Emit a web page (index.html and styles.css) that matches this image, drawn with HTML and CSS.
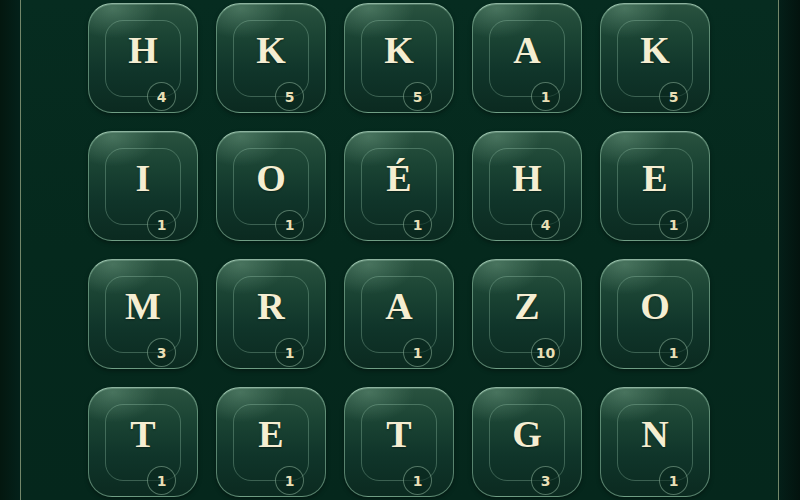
FILE: index.html
```html
<!DOCTYPE html>
<html lang="fr">
<head>
<meta charset="utf-8">
<title>Tiles</title>
<link rel="stylesheet" href="styles.css">
</head>
<body>
<main class="board">
  <div class="grid">
    <div class="tile"><span class="letter">H</span><span class="badge">4</span></div>
    <div class="tile"><span class="letter">K</span><span class="badge">5</span></div>
    <div class="tile"><span class="letter">K</span><span class="badge">5</span></div>
    <div class="tile"><span class="letter">A</span><span class="badge">1</span></div>
    <div class="tile"><span class="letter">K</span><span class="badge">5</span></div>

    <div class="tile"><span class="letter">I</span><span class="badge">1</span></div>
    <div class="tile"><span class="letter">O</span><span class="badge">1</span></div>
    <div class="tile"><span class="letter">É</span><span class="badge">1</span></div>
    <div class="tile"><span class="letter">H</span><span class="badge">4</span></div>
    <div class="tile"><span class="letter">E</span><span class="badge">1</span></div>

    <div class="tile"><span class="letter">M</span><span class="badge">3</span></div>
    <div class="tile"><span class="letter">R</span><span class="badge">1</span></div>
    <div class="tile"><span class="letter">A</span><span class="badge">1</span></div>
    <div class="tile"><span class="letter">Z</span><span class="badge">10</span></div>
    <div class="tile"><span class="letter">O</span><span class="badge">1</span></div>

    <div class="tile"><span class="letter">T</span><span class="badge">1</span></div>
    <div class="tile"><span class="letter">E</span><span class="badge">1</span></div>
    <div class="tile"><span class="letter">T</span><span class="badge">1</span></div>
    <div class="tile"><span class="letter">G</span><span class="badge">3</span></div>
    <div class="tile"><span class="letter">N</span><span class="badge">1</span></div>
  </div>
</main>
</body>
</html>
```

FILE: styles.css
```css
html, body {
  margin: 0;
  padding: 0;
}

body {
  width: 800px;
  height: 500px;
  overflow: hidden;
  background: linear-gradient(90deg, #03170f 0%, #04211a 2.5%, #05261c 50%, #04211a 97%, #03130e 100%);
  font-family: "Liberation Serif", "Times New Roman", serif;
}

.board {
  box-sizing: border-box;
  width: 759px;
  height: 500px;
  margin-left: 20px;
  border-left: 1.5px solid #73876a;
  border-right: 1.5px solid #73876a;
  background: linear-gradient(180deg, #062c20 0%, #05291d 50%, #05271c 100%);
  padding: 3px 0 0 67px;
}

.grid {
  display: grid;
  grid-template-columns: repeat(5, 110px);
  grid-auto-rows: 110px;
  gap: 18px;
}

.tile {
  position: relative;
  box-sizing: border-box;
  border-radius: 24px;
  border: 1.5px solid rgba(150, 200, 170, 0.55);
  border-top-color: rgba(185, 225, 200, 0.75);
  background:
    radial-gradient(ellipse 60% 40% at 22% 4%, rgba(170, 220, 190, 0.25), rgba(170, 220, 190, 0) 70%),
    linear-gradient(180deg, #29523f 0%, #1a4333 32%, #10352a 62%, #0b2a20 100%);
  box-shadow: inset 0 1px 0 rgba(220, 255, 235, 0.2), 0 2px 4px rgba(0, 0, 0, 0.35);
  display: flex;
  align-items: center;
  justify-content: center;
  padding-bottom: 17px;
}

.tile::before {
  content: "";
  position: absolute;
  left: 16px;
  top: 16px;
  right: 16px;
  bottom: 15px;
  border-radius: 18px;
  border: 1px solid rgba(170, 215, 190, 0.3);
}

.letter {
  position: relative;
  font-family: "Liberation Serif", "Times New Roman", serif;
  font-weight: 700;
  font-size: 38px;
  line-height: 1;
  color: #f5eed2;
  text-shadow: 0 1px 2px rgba(0, 0, 0, 0.4);
}

.badge {
  position: absolute;
  left: 58px;
  top: 78px;
  box-sizing: border-box;
  width: 29px;
  height: 29px;
  border-radius: 50%;
  border: 1.5px solid rgba(170, 210, 185, 0.45);
  background: rgba(8, 38, 28, 0.5);
  display: flex;
  align-items: center;
  justify-content: center;
  font-family: "DejaVu Sans", "Liberation Sans", sans-serif;
  font-weight: 700;
  font-size: 14px;
  color: #e8dfb6;
}
```
